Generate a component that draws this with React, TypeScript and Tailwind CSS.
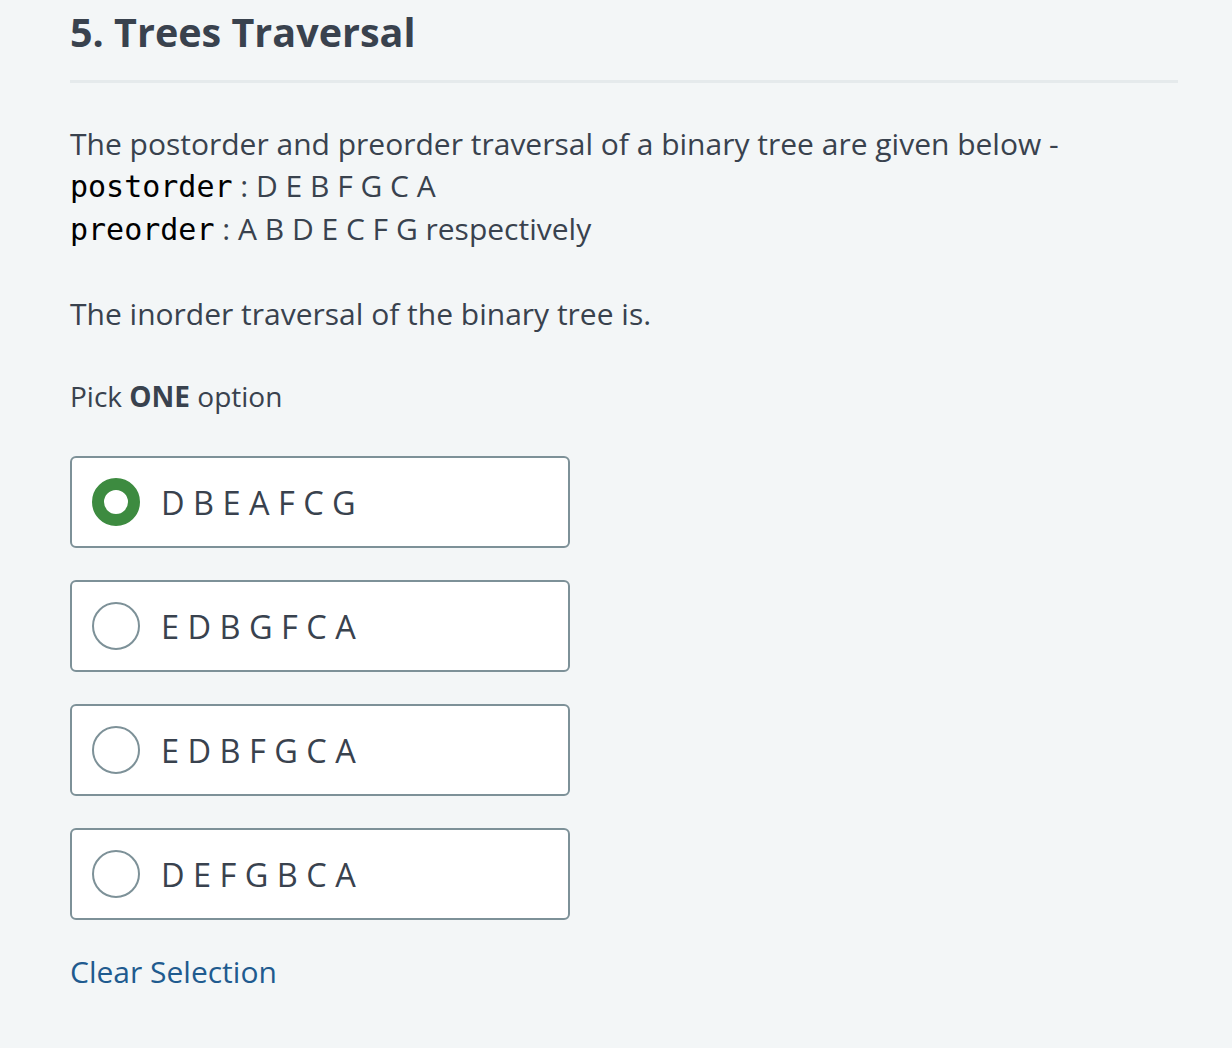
import React, { useState } from 'react';

const options = ['D B E A F C G', 'E D B G F C A', 'E D B F G C A', 'D E F G B C A'];

export default function App() {
  const [selected, setSelected] = useState<number | null>(0);

  return (
    <div className="min-h-[1048px] bg-[#f3f6f7] text-[#39424e] font-['Open_Sans',sans-serif]">
      <div className="pl-[70px] pr-[54px] pt-[2px]">
        <h2 className="text-[39.5px] leading-[60px] font-bold pb-[18px] border-b-[3px] border-[#e5eaec]">
          5. Trees Traversal
        </h2>

        <div className="mt-[40px] text-[30px] leading-[42px]">
          <p>The postorder and preorder traversal of a binary tree are given below -</p>
          <p>
            <code className="font-['DejaVu_Sans_Mono',monospace] text-[30px] text-black">postorder</code> : D E B F G C A
          </p>
          <p>
            <code className="font-['DejaVu_Sans_Mono',monospace] text-[30px] text-black">preorder</code> : A B D E C F G respectively
          </p>
          <p className="mt-[42px]">The inorder traversal of the binary tree is.</p>
        </div>

        <p className="mt-[40px] text-[28px] leading-[42px]">
          Pick <strong className="font-bold">ONE</strong> option
        </p>

        <div className="mt-[39px] flex flex-col gap-[32px] w-[500px]">
          {options.map((opt, i) => (
            <button
              key={i}
              onClick={() => setSelected(i)}
              className="flex items-center h-[92px] px-[20px] gap-[21px] bg-white border-2 border-[#7d9198] rounded-[6px] text-left"
            >
              {selected === i ? (
                <span className="w-[48px] h-[48px] rounded-full border-[12px] border-[#3d8b40] bg-white shrink-0" />
              ) : (
                <span className="w-[48px] h-[48px] rounded-full border-2 border-[#7d9198] bg-white shrink-0" />
              )}
              <span className="text-[32.5px] leading-[48px] pt-[2px] text-[#39424e]">{opt}</span>
            </button>
          ))}
        </div>

        <button
          onClick={() => setSelected(null)}
          className="mt-[31px] text-[30px] leading-[42px] text-[#1f5b8f]"
        >
          Clear Selection
        </button>
      </div>
    </div>
  );
}
